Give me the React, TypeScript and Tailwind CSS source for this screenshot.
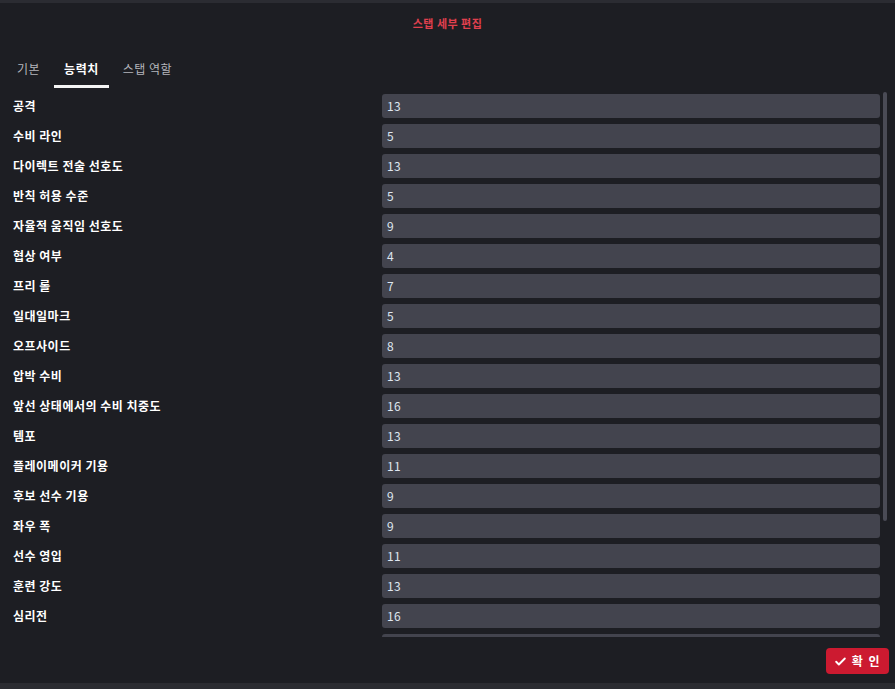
import React from "react";

const rows: [string, number][] = [
  ["공격", 13],
  ["수비 라인", 5],
  ["다이렉트 전술 선호도", 13],
  ["반칙 허용 수준", 5],
  ["자율적 움직임 선호도", 9],
  ["협상 여부", 4],
  ["프리 롤", 7],
  ["일대일마크", 5],
  ["오프사이드", 8],
  ["압박 수비", 13],
  ["앞선 상태에서의 수비 치중도", 16],
  ["템포", 13],
  ["플레이메이커 기용", 11],
  ["후보 선수 기용", 9],
  ["좌우 폭", 9],
  ["선수 영입", 11],
  ["훈련 강도", 13],
  ["심리전", 16],
];

const tabs = ["기본", "능력치", "스탭 역할"];

export default function App() {
  return (
    <div
      className="w-[895px] h-[689px] bg-[#1d1e23] flex flex-col overflow-hidden"
      style={{ fontFamily: '"Noto Sans CJK KR", "Noto Sans", sans-serif' }}
    >
      <div className="h-[3px] bg-[#2b2c32]" />
      <div className="h-[40px] flex items-center justify-center text-[11px] font-semibold tracking-[0.5px] text-[#e0404e]">
        스탭 세부 편집
      </div>
      <div className="flex gap-[4px] pl-[7px] mt-[9px]">
        {tabs.map((t, i) => (
          <div key={t} className="flex flex-col pt-[8px]">
            <span
              className={
                i === 1
                  ? "px-[10px] h-[18px] leading-[18px] text-[12px] tracking-[0.5px] font-bold text-white"
                  : "px-[10px] h-[18px] leading-[18px] text-[12px] tracking-[0.5px] text-[#b4b5bb]"
              }
            >
              {t}
            </span>
            <div className={i === 1 ? "mt-[7px] h-[3px] bg-[#f4f4f4]" : "mt-[7px] h-[3px]"} />
          </div>
        ))}
      </div>
      <div className="mt-[4px] h-[545px] flex">
        <div className="flex-1 overflow-hidden pt-[2px] flex flex-col gap-[6px]">
          {rows.map(([label, v]) => (
            <div key={label} className="flex items-center h-[24px] shrink-0">
              <div className="w-[382px] pl-[13px] text-[12px] font-semibold tracking-[0.5px] text-white">{label}</div>
              <div className="flex-1 h-[24px] bg-[#43444e] rounded-[3px] flex items-center px-[5px] text-[12px] tracking-[0.3px] text-[#dfe6f0]">
                {v}
              </div>
            </div>
          ))}
          <div className="flex h-[24px] shrink-0">
            <div className="w-[382px]" />
            <div className="flex-1 h-[24px] bg-[#43444e] rounded-[3px]" />
          </div>
        </div>
        <div className="w-[15px] flex justify-center pl-[3px] pr-[8px]">
          <div className="w-[4px] h-[429px] bg-[#4a4b55] rounded-[2px]" />
        </div>
      </div>
      <div className="flex-1 flex items-start justify-end pt-[11px] pr-[6px]">
        <button className="w-[63px] h-[26px] bg-[#cc1a30] rounded-[4px] flex items-center justify-center gap-[5px] text-white text-[12px] font-bold">
          <svg width="13" height="13" viewBox="0 0 24 24" fill="none" stroke="white" strokeWidth="3.5" strokeLinecap="round" strokeLinejoin="round">
            <path d="M4 12.5l5 5L20 6.5" />
          </svg>
          <span className="tracking-[1.5px]">확 인</span>
        </button>
      </div>
      <div className="h-[6px] bg-[#2b2c31]" />
    </div>
  );
}
